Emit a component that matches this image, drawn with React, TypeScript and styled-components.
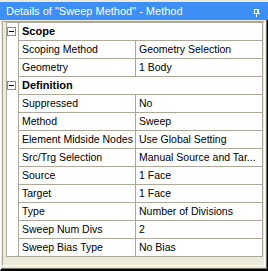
import React from "react";
import styled, { createGlobalStyle } from "styled-components";

const GlobalStyle = createGlobalStyle`
  html, body {
    margin: 0;
    padding: 0;
    background: #ece9d8;
  }
  * {
    box-sizing: border-box;
  }
`;

type Prop = { name: string; value: string };
type Category = { title: string; props: Prop[] };

const categories: Category[] = [
  {
    title: "Scope",
    props: [
      { name: "Scoping Method", value: "Geometry Selection" },
      { name: "Geometry", value: "1 Body" },
    ],
  },
  {
    title: "Definition",
    props: [
      { name: "Suppressed", value: "No" },
      { name: "Method", value: "Sweep" },
      { name: "Element Midside Nodes", value: "Use Global Setting" },
      { name: "Src/Trg Selection", value: "Manual Source and Tar..." },
      { name: "Source", value: "1 Face" },
      { name: "Target", value: "1 Face" },
      { name: "Type", value: "Number of Divisions" },
      { name: "Sweep Num Divs", value: "2" },
      { name: "Sweep Bias Type", value: "No Bias" },
    ],
  },
];

// pushpin glyph in the caption
const PinIcon = () => (
  <svg width="7" height="8" viewBox="0 0 7 8" shapeRendering="crispEdges">
    <rect x="1" y="0" width="1" height="4" fill="#fff" />
    <rect x="1" y="0" width="4" height="1" fill="#fff" />
    <rect x="4" y="0" width="2" height="4" fill="#fff" />
    <rect x="0" y="4" width="7" height="1" fill="#fff" />
    <rect x="3" y="5" width="1" height="3" fill="#fff" />
  </svg>
);

const DetailsView = () => {
  let rowIndex = 0;
  return (
    <Window>
      <TitleBar>
        <span>Details of "Sweep Method" - Method</span>
        <PinIcon />
      </TitleBar>
      <Panel>
        <Well>
          <Grid>
            {categories.map((cat) => {
              const headerFirst = rowIndex++ === 0;
              return (
                <React.Fragment key={cat.title}>
                  <Row $first={headerFirst}>
                    <Gutter>
                      <Expander />
                    </Gutter>
                    <HeaderCell>{cat.title}</HeaderCell>
                  </Row>
                  {cat.props.map((p) => {
                    rowIndex++;
                    return (
                      <Row key={p.name}>
                        <Gutter />
                        <NameCell>{p.name}</NameCell>
                        <ValueCell>{p.value}</ValueCell>
                      </Row>
                    );
                  })}
                </React.Fragment>
              );
            })}
          </Grid>
        </Well>
      </Panel>
    </Window>
  );
};

export default function App() {
  return (
    <>
      <GlobalStyle />
      <DetailsView />
    </>
  );
}

const Window = styled.div`
  width: 268px;
  height: 271px;
  background: #ece9d8;
  padding-top: 2px;
  display: flex;
  flex-direction: column;
  font-family: "Liberation Sans", Arial, sans-serif;
  color: #000;
`;

const TitleBar = styled.div`
  height: 18px;
  background: #3d8ef5;
  color: #fff;
  font-size: 11px;
  display: flex;
  align-items: center;
  justify-content: space-between;
  padding: 0 8px 0 6px;
  svg {
    margin-top: 4px;
  }
`;

const Panel = styled.div`
  flex: 1;
  display: flex;
  flex-direction: column;
  border-left: 1px solid #fff;
  border-right: 1px solid #000;
  border-bottom: 2px solid #000;
  box-shadow: inset -1px -1px 0 #716f64;
`;

const Well = styled.div`
  flex: 1;
  margin: 1px 2px 3px 1px;
  border-top: 1px solid #aca899;
  border-left: 1px solid #aca899;
  border-right: 1px solid #fff;
  border-bottom: 1px solid #fff;
  padding: 0 1px 8px 3px;
`;

const Grid = styled.div`
  border: 1px solid #aca899;
  background: #fff;
  font-size: 10.5px;
`;

const Row = styled.div<{ $first?: boolean }>`
  display: flex;
  height: ${(p) => (p.$first ? "17px" : "18px")};
  & > div:not(:first-child) {
    border-top: ${(p) => (p.$first ? "none" : "1px solid #aca899")};
  }
`;

const Gutter = styled.div`
  width: 12px;
  flex: none;
  border-right: 1px solid #aca899;
  display: flex;
  align-items: flex-end;
  padding-bottom: 4px;
`;

const Expander = styled.div`
  width: 9px;
  height: 9px;
  border: 1px solid #8c8c8c;
  background: #fff;
  position: relative;
  &::after {
    content: "";
    position: absolute;
    left: 1px;
    top: 3px;
    width: 5px;
    height: 1px;
    background: #000;
  }
`;

const Cell = styled.div`
  line-height: 17px;
  padding-left: 3px;
  white-space: nowrap;
  overflow: hidden;
`;

const HeaderCell = styled(Cell)`
  flex: 1;
  font-weight: bold;
  font-size: 11px;
`;

const NameCell = styled(Cell)`
  width: 117px;
  flex: none;
  border-right: 1px solid #aca899;
`;

const ValueCell = styled(Cell)`
  flex: 1;
`;
